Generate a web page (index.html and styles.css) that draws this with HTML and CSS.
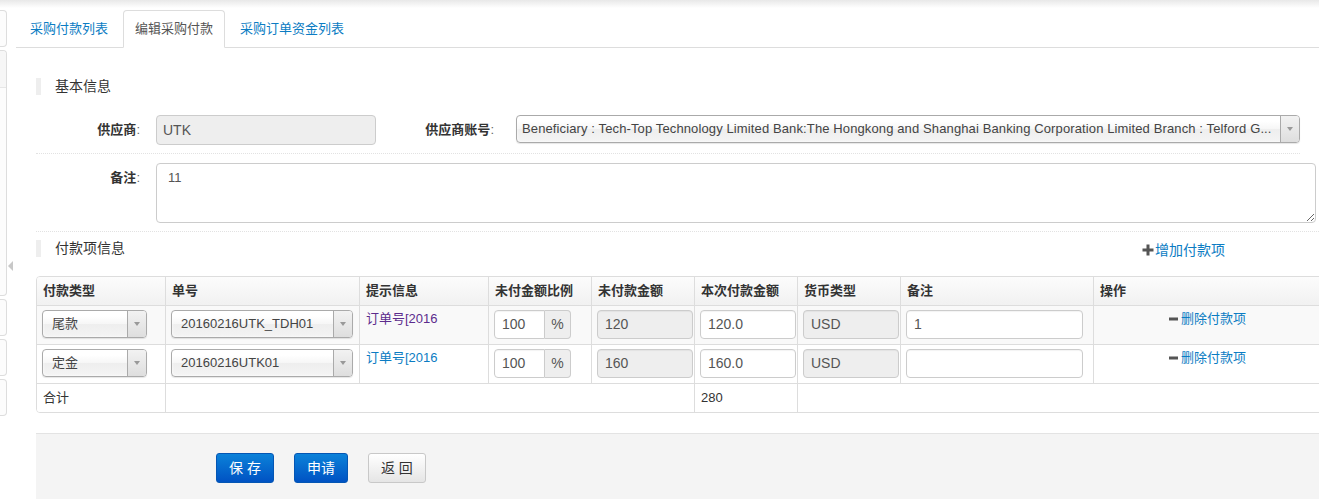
FILE: index.html
```html
<!DOCTYPE html>
<html lang="zh-CN">
<head>
<meta charset="utf-8">
<title>编辑采购付款</title>
<link rel="stylesheet" href="styles.css">
</head>
<body>
<div class="page">
  <aside class="side">
    <div class="sbox s1"></div>
    <div class="sbox s2"><div class="shead"></div><span class="stoggle"></span></div>
    <div class="sbox s3"></div>
    <div class="sbox s3"></div>
    <div class="sbox s3"></div>
  </aside>
  <main class="main">
    <ul class="tabs">
      <li class="tab"><a>采购付款列表</a></li>
      <li class="tab active"><a>编辑采购付款</a></li>
      <li class="tab"><a>采购订单资金列表</a></li>
    </ul>
    <div class="content">
      <h3 class="sec">基本信息</h3>
      <div class="frow frow1">
        <label class="lbl">供应商<span class="colon">:</span></label>
        <div class="inp-ro">UTK</div>
        <label class="lbl lbl2">供应商账号<span class="colon">:</span></label>
        <div class="csel wide">
          <span class="val">Beneficiary : Tech-Top Technology Limited Bank:The Hongkong and Shanghai Banking Corporation Limited Branch : Telford G...</span>
          <span class="arr"><i class="tri"></i></span>
        </div>
      </div>
      <div class="frow frow2">
        <label class="lbl">备注<span class="colon">:</span></label>
        <textarea class="ta">11</textarea>
      </div>
      <div class="sec-line">
        <h3 class="sec">付款项信息</h3>
        <a class="add"><svg class="ico-plus" width="12" height="12" viewBox="0 0 12 12"><rect x="4.5" y="0.5" width="3" height="11" fill="#555"/><rect x="0.5" y="4.5" width="11" height="3" fill="#555"/></svg>增加付款项</a>
      </div>
      <div class="tbl-wrap">
        <table class="grid">
          <thead>
            <tr>
              <th class="w1">付款类型</th>
              <th class="w2">单号</th>
              <th class="w3">提示信息</th>
              <th class="w4">未付金额比例</th>
              <th class="w5">未付款金额</th>
              <th class="w6">本次付款金额</th>
              <th class="w7">货币类型</th>
              <th class="w8">备注</th>
              <th class="w9">操作</th>
            </tr>
          </thead>
          <tbody>
            <tr class="row odd">
              <td><div class="csel s-type"><span class="val">尾款</span><span class="arr"><i class="tri"></i></span></div></td>
              <td><div class="csel s-no"><span class="val">20160216UTK_TDH01</span><span class="arr"><i class="tri"></i></span></div></td>
              <td class="txt"><a class="link visited">订单号[2016</a></td>
              <td><div class="ig"><span class="tin ig-in">100</span><span class="ig-add">%</span></div></td>
              <td><span class="tin ro w96">120</span></td>
              <td><span class="tin w96">120.0</span></td>
              <td><span class="tin ro w96">USD</span></td>
              <td><span class="tin w177">1</span></td>
              <td class="txt op"><a class="link del"><svg width="9" height="4" viewBox="0 0 9 4"><rect x="0" y="0.5" width="9" height="3" fill="#555"/></svg>删除付款项</a></td>
            </tr>
            <tr class="row">
              <td><div class="csel s-type"><span class="val">定金</span><span class="arr"><i class="tri"></i></span></div></td>
              <td><div class="csel s-no"><span class="val">20160216UTK01</span><span class="arr"><i class="tri"></i></span></div></td>
              <td class="txt"><a class="link">订单号[2016</a></td>
              <td><div class="ig"><span class="tin ig-in">100</span><span class="ig-add">%</span></div></td>
              <td><span class="tin ro w96">160</span></td>
              <td><span class="tin w96">160.0</span></td>
              <td><span class="tin ro w96">USD</span></td>
              <td><span class="tin w177"></span></td>
              <td class="txt op"><a class="link del"><svg width="9" height="4" viewBox="0 0 9 4"><rect x="0" y="0.5" width="9" height="3" fill="#555"/></svg>删除付款项</a></td>
            </tr>
            <tr class="sum">
              <td>合计</td>
              <td colspan="4"></td>
              <td>280</td>
              <td colspan="3"></td>
            </tr>
          </tbody>
        </table>
      </div>
      <div class="footer">
        <button class="btn btn-primary">保 存</button>
        <button class="btn btn-primary">申请</button>
        <button class="btn btn-default">返 回</button>
      </div>
    </div>
  </main>
</div>
</body>
</html>
```
FILE: styles.css
```css
* { box-sizing: border-box; }
html, body { margin: 0; padding: 0; }
body {
  width: 1319px;
  height: 499px;
  overflow: hidden;
  font-family: "Liberation Sans", Arial, "Noto Sans CJK SC", sans-serif;
  font-size: 13px;
  color: #333;
  background: #fff linear-gradient(#e8e8e8, #fff 8px) no-repeat;
}
.page { display: flex; height: 499px; }

/* left collapsed sidebar */
.side {
  width: 16px;
  flex: none;
  display: flex;
  flex-direction: column;
  gap: 3px;
  padding-top: 10px;
}
.sbox {
  width: 7px;
  border: 1px solid #ddd;
  border-left: none;
  border-radius: 0 4px 4px 0;
  background: #fcfcfc;
  position: relative;
}
.s1 { height: 37px; }
.s2 { height: 246px; }
.s3 { height: 37px; }
.shead { height: 37px; border-bottom: 1px solid #e6e6e6; background: #f6f6f6; border-radius: 0 4px 0 0; }
.stoggle {
  position: absolute;
  left: 8px;
  top: 210px;
  width: 0; height: 0;
  border-top: 5px solid transparent;
  border-bottom: 5px solid transparent;
  border-right: 5px solid #c8c8c8;
}

.main { flex: 1; min-width: 0; overflow: hidden; }

/* tabs */
.tabs {
  display: flex;
  list-style: none;
  margin: 0;
  padding: 10px 0 0 2px;
  border-bottom: 1px solid #ddd;
}
.tab { margin-right: 3px; margin-bottom: -1px; }
.tab a {
  display: block;
  height: 38px;
  line-height: 35px;
  padding: 0 11px;
  border: 1px solid transparent;
  border-radius: 4px 4px 0 0;
  color: #0b7cc3;
  font-size: 13px;
}
.tab.active a { border-color: #ddd #ddd transparent; background: #fff; color: #555; }

.content { padding: 30px 0 0 20px; }

.sec {
  margin: 0;
  height: 17px;
  line-height: 17px;
  border-left: 5px solid #eee;
  padding-left: 14px;
  font-size: 14px;
  font-weight: normal;
  color: #333;
}

/* form rows */
.frow {
  display: flex;
  align-items: flex-start;
  border-bottom: 1px dotted #e2e2e2;
  padding-bottom: 8px;
}
.frow1 { margin: 20px 19px 0 0; }
.frow2 { margin-top: 9px; }
.lbl {
  flex: none;
  width: 120px;
  padding-right: 16px;
  text-align: right;
  font-weight: bold;
  line-height: 30px;
  color: #333;
}
.colon { font-weight: normal; color: #666; }
.lbl2 { width: 140px; padding-right: 22px; }
.inp-ro {
  flex: none;
  width: 220px;
  height: 30px;
  border: 1px solid #ccc;
  border-radius: 4px;
  background: #eee;
  padding: 0 6px;
  line-height: 28px;
  font-size: 14px;
  color: #555;
}
.ta {
  flex: 1;
  height: 60px;
  margin-right: 3px;
  border: 1px solid #ccc;
  border-radius: 4px;
  padding: 6px 11px;
  font-family: "Liberation Sans", Arial, sans-serif;
  font-size: 13px;
  color: #555;
  resize: vertical;
}

/* chosen-like select */
.csel {
  display: flex;
  height: 28px;
  border: 1px solid #aaa;
  border-radius: 4px;
  background: linear-gradient(#fff 20%, #f6f6f6 50%, #eee 52%, #f4f4f4);
  box-shadow: 0 0 3px #fff inset, 0 1px 1px rgba(0,0,0,0.1);
  overflow: hidden;
  color: #444;
}
.csel .val {
  flex: 1;
  min-width: 0;
  white-space: nowrap;
  overflow: hidden;
  padding-left: 9px;
  line-height: 26px;
}
.csel .arr {
  flex: none;
  width: 19px;
  border-left: 1px solid #aaa;
  background: linear-gradient(#f2f2f2, #dedede);
  display: flex;
  align-items: center;
  justify-content: center;
}
.tri {
  width: 0; height: 0;
  border-left: 3px solid transparent;
  border-right: 3px solid transparent;
  border-top: 4px solid #999;
}
.csel.wide { flex: 1; }
.csel.wide .val { padding-left: 5px; font-size: 13px; letter-spacing: 0.12px; }

.sec-line {
  display: flex;
  align-items: center;
  height: 17px;
  margin-top: 8px;
}
.sec-line .sec { flex: 1; }
.add {
  display: flex;
  align-items: center;
  gap: 1px;
  margin-right: 94px;
  margin-top: 3px;
  font-size: 14px;
  line-height: 17px;
  color: #0b7cc3;
}

/* table */
.tbl-wrap {
  margin-top: 19px;
  width: 1292px;
  border: 1px solid #ddd;
  border-radius: 4px;
  overflow: hidden;
}
.grid {
  width: 1290px;
  table-layout: fixed;
  border-collapse: separate;
  border-spacing: 0;
}
.grid th, .grid td {
  border-left: 1px solid #ddd;
  border-top: 1px solid #ddd;
  text-align: left;
  vertical-align: top;
}
.grid th:first-child, .grid td:first-child { border-left: none; }
.grid th {
  border-top: none;
  height: 28px;
  padding: 0 6px;
  line-height: 28px;
  font-weight: bold;
  color: #333;
  background: linear-gradient(#fcfcfc, #f1f1f1);
}
.w1 { width: 128px; }
.w2 { width: 194px; }
.w3 { width: 129px; }
.w4, .w5, .w6, .w7 { width: 103px; }
.w8 { width: 193px; }
.w9 { width: 234px; }

.row td { height: 39px; padding: 4px 5px 5px; }
.row.odd td { background: #f9f9f9; }
.row td.txt { padding: 4px 6px 0; line-height: 17px; }
.row td.op { text-align: center; padding-left: 0; }
.s-type { width: 105px; }
.s-type .val { padding-left: 9px; }
.s-no { width: 182px; }

.link { color: #0b7cc3; }
.link.visited { color: #5c2c8d; }
.del { display: inline-flex; align-items: center; gap: 3px; vertical-align: top; line-height: 17px; }

.tin {
  display: block;
  height: 29px;
  border: 1px solid #ccc;
  border-radius: 4px;
  background: #fff;
  padding: 0 7px;
  line-height: 27px;
  font-size: 14px;
  color: #555;
  box-shadow: inset 0 1px 1px rgba(0,0,0,0.05);
}
.tin.ro { background: #eee; }
.w96 { width: 96px; }
.w177 { width: 177px; }
.ig { display: flex; width: 77px; }
.ig-in { width: 51px; border-radius: 4px 0 0 4px; }
.ig-add {
  width: 26px;
  height: 29px;
  border: 1px solid #ccc;
  border-left: none;
  border-radius: 0 4px 4px 0;
  background: #eee;
  text-align: center;
  line-height: 27px;
  font-size: 14px;
  color: #555;
}

.sum td { height: 29px; padding: 0 6px; line-height: 28px; background: #fff; }

/* footer */
.footer {
  margin-top: 20px;
  border-top: 1px solid #e3e3e3;
  background: #f4f4f4;
  height: 80px;
  padding: 19px 0 0 180px;
  display: flex;
  align-items: flex-start;
  gap: 20px;
}
.btn {
  height: 30px;
  padding: 0 12px;
  border-radius: 3px;
  border: 1px solid;
  font-family: "Liberation Sans", Arial, "Noto Sans CJK SC", sans-serif;
  font-size: 14px;
  line-height: 28px;
}
.btn-primary {
  background: linear-gradient(#0b82d9, #0052c3);
  border-color: #0456b4;
  color: #fff;
}
.btn-default {
  background: linear-gradient(#fff, #e5e5e5);
  border-color: #c8c8c8;
  color: #333;
}
```
